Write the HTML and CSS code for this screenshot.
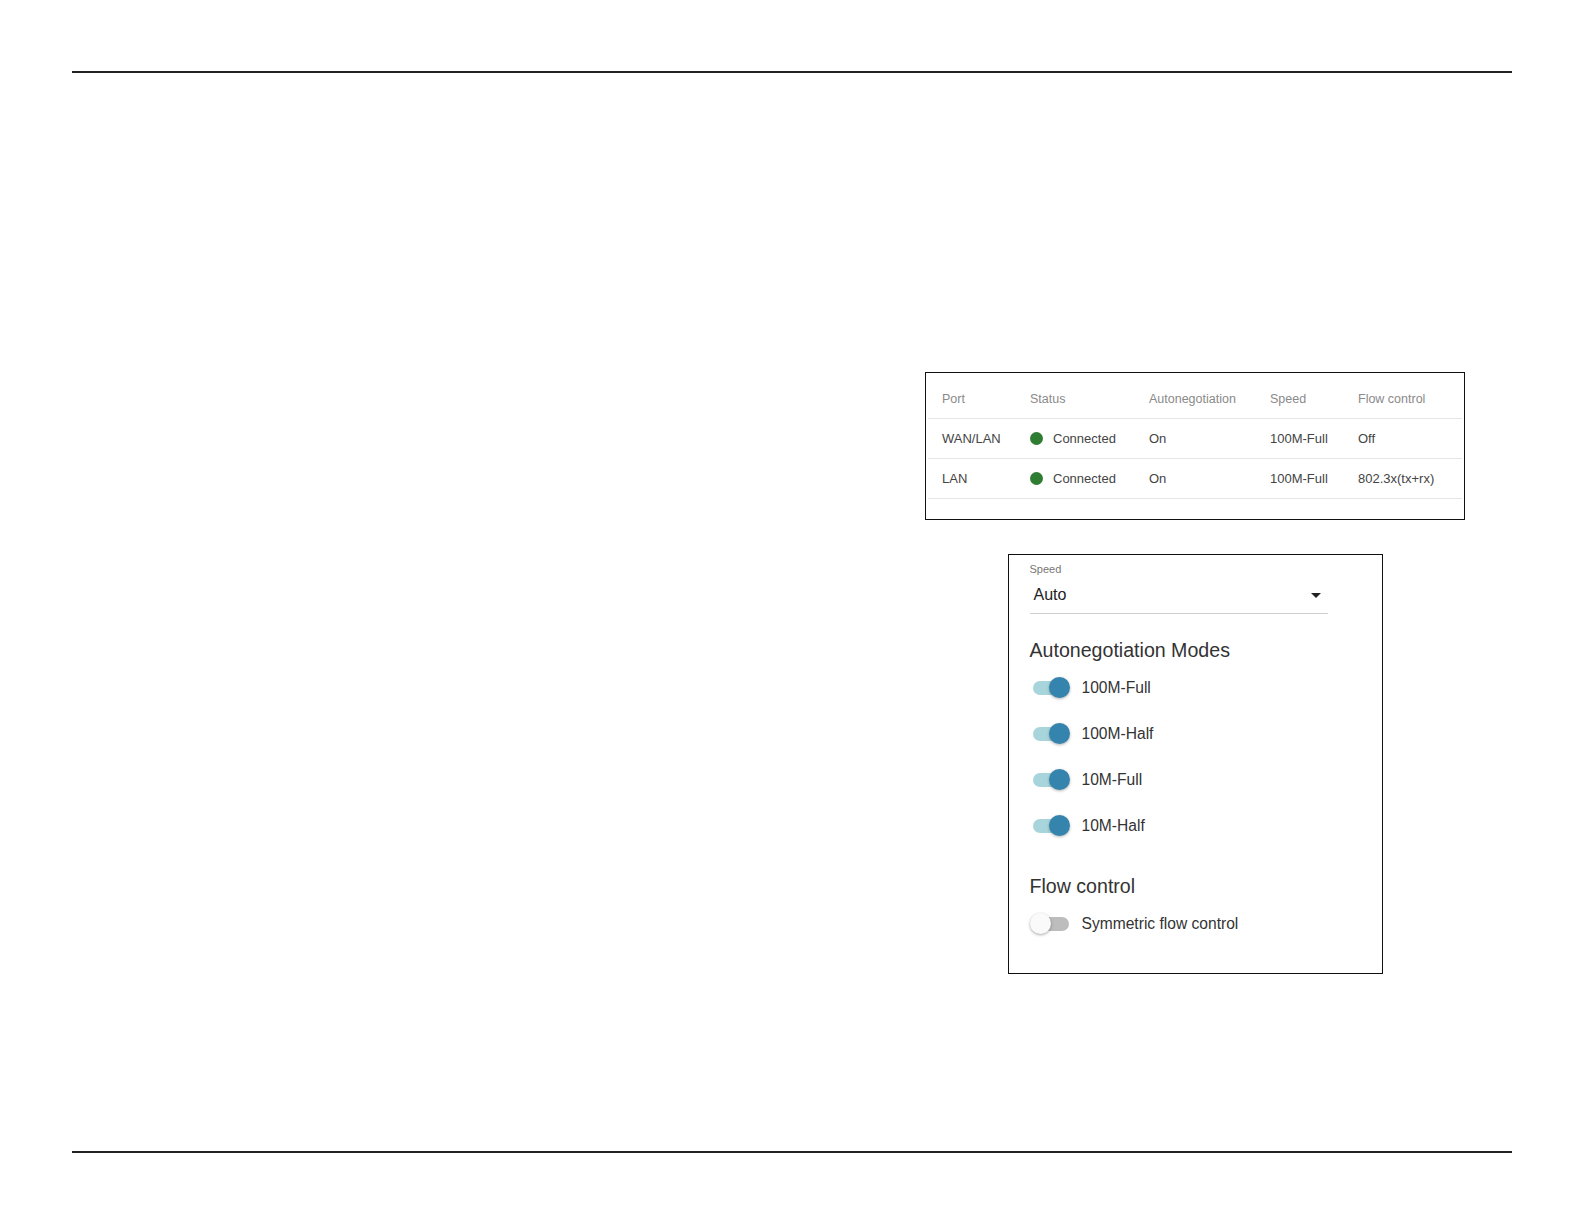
FILE: index.html
```html
<!DOCTYPE html>
<html>
<head>
<meta charset="utf-8">
<link rel="stylesheet" href="styles.css">
</head>
<body>
<div class="page">
  <div class="rule rule-top"></div>
  <main class="main">
    <div class="figures">
      <div class="port-table">
        <div class="row head">
          <span>Port</span><span>Status</span><span>Autonegotiation</span><span>Speed</span><span>Flow control</span>
        </div>
        <div class="row">
          <span>WAN/LAN</span><span class="status"><i class="dot"></i>Connected</span><span>On</span><span>100M-Full</span><span>Off</span>
        </div>
        <div class="row">
          <span>LAN</span><span class="status"><i class="dot"></i>Connected</span><span>On</span><span>100M-Full</span><span>802.3x(tx+rx)</span>
        </div>
      </div>

      <div class="settings">
        <div class="field-label">Speed</div>
        <div class="select">
          <span>Auto</span>
          <svg class="caret" width="10" height="5" viewBox="0 0 10 5"><path d="M0 0H10L5 5Z" fill="#222"/></svg>
        </div>
        <h2 class="section-title">Autonegotiation Modes</h2>
        <div class="toggle-row"><span class="switch on"><span class="track"></span><span class="thumb"></span></span><span class="toggle-label">100M-Full</span></div>
        <div class="toggle-row"><span class="switch on"><span class="track"></span><span class="thumb"></span></span><span class="toggle-label">100M-Half</span></div>
        <div class="toggle-row"><span class="switch on"><span class="track"></span><span class="thumb"></span></span><span class="toggle-label">10M-Full</span></div>
        <div class="toggle-row"><span class="switch on"><span class="track"></span><span class="thumb"></span></span><span class="toggle-label">10M-Half</span></div>
        <h2 class="section-title second">Flow control</h2>
        <div class="toggle-row"><span class="switch off"><span class="track"></span><span class="thumb"></span></span><span class="toggle-label">Symmetric flow control</span></div>
      </div>
    </div>
  </main>
  <div class="rule rule-bottom"></div>
</div>
</body>
</html>
```

FILE: styles.css
```css
html, body {
  margin: 0;
  padding: 0;
  background: #fff;
}

body {
  font-family: "Liberation Sans", Arial, sans-serif;
  color: #333;
}

.page {
  height: 1224px;
  display: flex;
  flex-direction: column;
}

.rule {
  margin: 0 72px;
  height: 0;
  border-top: 2px solid #222;
}

.rule-top {
  margin-top: 71px;
}

.rule-bottom {
  margin-top: auto;
  margin-bottom: 71px;
}

.main {
  padding-top: 299px;
  padding-left: 925px;
}

.figures {
  width: 540px;
  display: flex;
  flex-direction: column;
  align-items: center;
  gap: 34px;
}

/* ---------- port table ---------- */
.port-table {
  box-sizing: border-box;
  width: 540px;
  border: 1px solid #111;
  padding: 6px 2px 20px;
}

.row {
  display: grid;
  grid-template-columns: 88px 119px 121px 88px 1fr;
  height: 40px;
  box-sizing: border-box;
  border-bottom: 1px solid #e6e6e6;
  padding-left: 14px;
  align-items: center;
  font-size: 13px;
  color: #444;
}

.row span {
  white-space: nowrap;
}

.row.head {
  color: #8a8a8a;
  font-size: 12.5px;
}

.status {
  display: flex;
  align-items: center;
}

.dot {
  display: inline-block;
  width: 13px;
  height: 13px;
  border-radius: 50%;
  background: #2e7d32;
  margin-right: 10px;
}

/* ---------- settings card ---------- */
.settings {
  box-sizing: border-box;
  width: 375px;
  border: 1px solid #111;
  padding: 7px 20px 26px 21px;
}

.field-label {
  font-size: 11px;
  line-height: 14px;
  color: #777;
}

.select {
  margin-top: 7px;
  width: 298px;
  box-sizing: border-box;
  height: 31px;
  padding: 0 7px 6px 4px;
  border-bottom: 1px solid #cfcfcf;
  display: flex;
  align-items: center;
  justify-content: space-between;
  font-size: 16px;
  line-height: 24px;
  color: #222;
}

.caret {
  display: block;
}

.section-title {
  margin: 24px 0 3px;
  font-size: 19.6px;
  line-height: 24px;
  font-weight: normal;
  color: #333;
}

.section-title.second {
  margin-top: 25px;
}

.toggle-row {
  height: 46px;
  display: flex;
  align-items: center;
}

.switch {
  position: relative;
  width: 38px;
  height: 22px;
  margin-left: 3px;
  margin-right: 11px;
  flex: none;
}

.switch .track {
  position: absolute;
  left: 0;
  top: 4px;
  width: 36px;
  height: 14px;
  border-radius: 7px;
  background: #a8d5dc;
}

.switch .thumb {
  position: absolute;
  top: 0;
  width: 21px;
  height: 21px;
  border-radius: 50%;
}

.switch.on .thumb {
  left: 16px;
  background: #3584ad;
  box-shadow: 0 1px 3px rgba(0, 0, 0, 0.3);
}

.switch.off .track {
  background: #bdbdbd;
}

.switch.off .thumb {
  left: -3px;
  background: #fafafa;
  box-shadow: 0 1px 3px rgba(0, 0, 0, 0.35);
}

.toggle-label {
  font-size: 15.6px;
  color: #333;
}
```
